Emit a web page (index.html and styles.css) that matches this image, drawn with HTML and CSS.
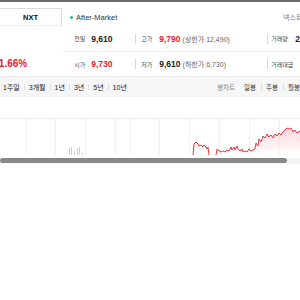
FILE: index.html
```html
<!DOCTYPE html>
<html lang="ko">
<head>
<meta charset="utf-8">
<link rel="stylesheet" href="styles.css">
</head>
<body>
<div class="topbar"></div>
<div class="header">
  <div class="tab">NXT</div>
  <div class="market"><span class="dot"></span>After-Market</div>
  <div class="nextrade">넥스트레이드</div>
</div>
<div class="summary">
  <div class="pricecol">
    <div class="rate">+1.66%</div>
  </div>
  <div class="table">
    <div class="row">
      <div class="cell c1"><span class="lbl">전일</span><span class="num">9,610</span></div>
      <div class="cell c2"><span class="lbl">고가</span><span class="num red">9,790</span><span class="sub">(상한가 12,490)</span></div>
      <div class="cell c3"><span class="lbl">거래량</span><span class="num">2</span></div>
    </div>
    <div class="row line">
      <div class="cell c1"><span class="lbl">시가</span><span class="num red">9,730</span></div>
      <div class="cell c2"><span class="lbl">저가</span><span class="num">9,610</span><span class="sub">(하한가 6,730)</span></div>
      <div class="cell c3"><span class="lbl">거래대금</span></div>
    </div>
  </div>
</div>
<div class="periodbar">
  <div class="periods">
    <span class="p">1주일</span><span class="p">3개월</span><span class="p">1년</span><span class="p">3년</span><span class="p">5년</span><span class="p">10년</span>
  </div>
  <div class="candles">
    <span class="c dim">봉차트</span><span class="c">일봉</span><span class="c">주봉</span><span class="c">월봉</span>
  </div>
</div>
<div class="chart">
  <svg width="300" height="61" viewBox="0 0 300 61">
    <defs>
      <linearGradient id="fillg" x1="0" y1="0" x2="0" y2="1">
        <stop offset="0" stop-color="#f9c9cf" stop-opacity="0.75"/>
        <stop offset="0.75" stop-color="#fde8ea" stop-opacity="0.5"/>
        <stop offset="1" stop-color="#ffffff" stop-opacity="0"/>
      </linearGradient>
    </defs>
    <line x1="0" y1="21.5" x2="300" y2="21.5" stroke="#eeeeee"/>
    <g stroke="#f0f0f0">
      <line x1="26.5" y1="22" x2="26.5" y2="58"/>
      <line x1="55.5" y1="22" x2="55.5" y2="58"/>
      <line x1="85.5" y1="22" x2="85.5" y2="58"/>
      <line x1="115.5" y1="22" x2="115.5" y2="58"/>
      <line x1="130.5" y1="22" x2="130.5" y2="58"/>
      <line x1="159.5" y1="22" x2="159.5" y2="58"/>
      <line x1="189.5" y1="22" x2="189.5" y2="58"/>
      <line x1="219.5" y1="22" x2="219.5" y2="58"/>
      <line x1="249.5" y1="22" x2="249.5" y2="58"/>
      <line x1="279.5" y1="22" x2="279.5" y2="58"/>
    </g>
    <g fill="#cfcfcf">
      <rect x="69" y="51" width="1" height="7"/>
      <rect x="71" y="50" width="1" height="8"/>
      <rect x="74" y="54" width="1" height="4"/>
      <rect x="77" y="51" width="1" height="7"/>
      <rect x="79" y="50" width="1" height="8"/>
      <rect x="82" y="56" width="1" height="2"/>
    </g>
    <polygon fill="url(#fillg)" points="193,58 194,47 196,45 198,47 199,49 201,48 203,50 204,48 206,50 207,52 208,50 209,58 216,58 217,52 219,54 221,55 223,54 225,55 227,53 229,54 231,50 232,53 234,50 235,53 237,49 238,52 240,54 242,52 243,55 245,54 247,55 249,52 251,54 253,53 255,52 256,46 258,49 259,42 261,45 263,39 265,41 267,37 269,40 271,38 273,41 275,37 277,39 279,36 281,38 283,35 285,33 287,31 289,32 291,31 293,35 295,33 297,36 300,34 300,58"/>
    <polyline fill="none" stroke="#e8202e" stroke-width="0.9" points="193,58 194,47 196,45 198,47 199,49 201,48 203,50 204,48 206,50 207,52 208,50 209,58"/>
    <polyline fill="none" stroke="#e8202e" stroke-width="0.9" points="216,58 217,52 219,54 221,55 223,54 225,55 227,53 229,54 231,50 232,53 234,50 235,53 237,49 238,52 240,54 242,52 243,55 245,54 247,55 249,52 251,54 253,53 255,52 256,46 258,49 259,42 261,45 263,39 265,41 267,37 269,40 271,38 273,41 275,37 277,39 279,36 281,38 283,35 285,33 287,31 289,32 291,31 293,35 295,33 297,36 300,34"/>
  </svg>
</div>
<div class="scrolltrack"><div class="thumb"></div></div>
</body>
</html>
```

FILE: styles.css
```css
html, body {
  margin: 0;
  padding: 0;
  background: #ffffff;
}
body {
  width: 300px;
  height: 300px;
  overflow: hidden;
  font-family: "Liberation Sans", "Noto Sans CJK KR", sans-serif;
  color: #333;
}
.topbar {
  height: 2px;
  background: #6e6e6e;
}
.header {
  display: flex;
  align-items: center;
  height: 24px;
  padding-top: 6px;
  box-sizing: border-box;
  margin-left: -1px;
  white-space: nowrap;
}
.tab {
  width: 63px;
  height: 18px;
  box-sizing: border-box;
  border: 1px solid #dcdcdc;
  border-bottom-color: #eeeeee;
  display: flex;
  align-items: center;
  justify-content: center;
  font-size: 7.5px;
  font-weight: bold;
  color: #111;
}
.market {
  display: flex;
  align-items: center;
  margin-left: 8px;
  font-size: 7.5px;
  color: #333;
}
.dot {
  width: 3px;
  height: 3px;
  border-radius: 50%;
  background: #1fbf8f;
  margin-right: 3px;
}
.nextrade {
  margin-left: auto;
  margin-right: -25px;
  width: 42px;
  font-size: 7px;
  color: #777;
  font-family: "Noto Sans CJK KR", sans-serif;
}
.summary {
  display: flex;
  height: 50px;
}
.pricecol {
  width: 64px;
  display: flex;
  flex-direction: column;
  justify-content: flex-end;
  overflow: hidden;
}
.rate {
  font-size: 10px;
  font-weight: bold;
  color: #e8202e;
  height: 25px;
  line-height: 25px;
  margin-left: -7px;
  white-space: nowrap;
}
.table {
  flex: 1;
  display: flex;
  flex-direction: column;
}
.row {
  height: 25px;
  display: flex;
  align-items: center;
  white-space: nowrap;
}
.row.line {
  border-top: 1px solid #f0f0f0;
  height: 24px;
}
.cell {
  display: flex;
  align-items: center;
  height: 10px;
}
.c1 {
  width: 74px;
  padding-left: 12px;
  box-sizing: border-box;
  border-right: 1px solid #d8d8d8;
}
.c2 {
  width: 132px;
  padding-left: 5px;
  box-sizing: border-box;
  border-right: 1px solid #d8d8d8;
}
.c3 {
  padding-left: 3px;
}
.lbl {
  font-size: 6px;
  color: #444;
  font-family: "Noto Sans CJK KR", sans-serif;
}
.c1 .lbl { width: 17px; }
.c2 .lbl { width: 18px; }
.c3 .lbl { width: 24px; }
.num {
  font-size: 8.5px;
  font-weight: bold;
  color: #222;
}
.num.red { color: #e8202e; }
.sub {
  font-size: 7px;
  color: #666;
  margin-left: 2px;
}
.periodbar {
  height: 21px;
  background: #f6f6f6;
  border-top: 1px solid #ececec;
  box-sizing: border-box;
  display: flex;
  align-items: center;
  justify-content: space-between;
  white-space: nowrap;
}
.periods {
  display: flex;
  align-items: center;
  padding-left: 3px;
}
.p {
  font-size: 7px;
  color: #222;
  display: flex;
  align-items: center;
}
.p + .p::before {
  content: "";
  display: inline-block;
  width: 1px;
  height: 6px;
  background: #dddddd;
  margin: 0 4px;
}
.candles {
  display: flex;
  align-items: center;
  margin-right: 0;
}
.c {
  font-size: 6.5px;
  color: #333;
  display: flex;
  align-items: center;
}
.c.dim {
  color: #888;
  margin-right: 9px;
}
.c + .c:not(.dim)::before {
  content: "";
  display: inline-block;
  width: 1px;
  height: 6px;
  background: #dddddd;
  margin: 0 4.5px;
}
.c.dim + .c::before {
  display: none;
}
.chart {
  height: 61px;
  overflow: hidden;
}
.chart svg {
  display: block;
}
.scrolltrack {
  height: 6px;
  background: #f4f4f4;
}
.thumb {
  width: 287px;
  height: 5px;
  background: #888888;
  border-radius: 3px;
}
```
